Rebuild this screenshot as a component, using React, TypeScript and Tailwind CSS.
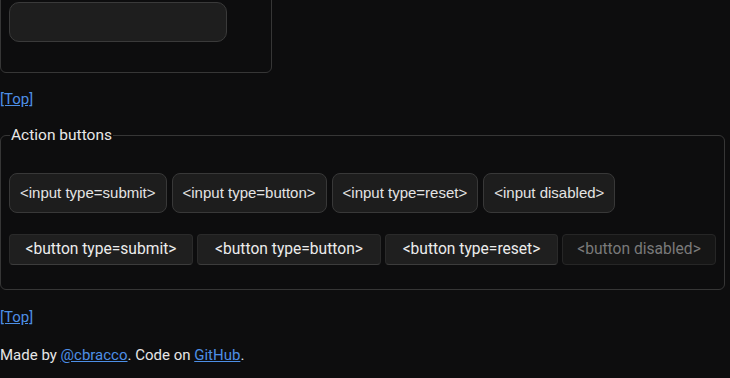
import React from "react";

const body = { fontFamily: 'Roboto, "Noto Sans", sans-serif' };

export default function App() {
  const inputBtn =
    "shrink-0 whitespace-nowrap rounded-[8px] border border-[#383838] bg-[#1d1d1d] px-[10px] py-[10px] text-[15px] leading-[18px] text-[#e4e4e4] font-['Liberation_Sans',Arial,sans-serif]";
  const btn =
    "shrink-0 whitespace-nowrap rounded-[4px] border border-[#2a2a2a] border-b-[#3c3c3c] bg-[#1f1f1f] py-[5px] text-center text-[15.6px] leading-[19px] text-[#ececec]";
  return (
    <div className="min-h-[378px] w-[730px] overflow-hidden bg-[#0d0d0e] text-[15px] leading-[24px] text-[#e6e6e6]" style={body}>
      <div className="-mt-[30px] w-[272px] rounded-[6px] border border-[#363636] pl-[8px] pt-[31px] pb-[30px]">
        <div className="h-[40px] w-[218px] rounded-[10px] border border-[#3a3a3a] bg-[#1e1e1e]" />
      </div>
      <div className="mt-[14px]">
        <a href="#top" className="text-[#4d8fe6] underline">[Top]</a>
      </div>
      <fieldset className="mt-[12px] w-[725px] rounded-[6px] border border-[#363636] px-[8px] pt-[26px] pb-[24px]">
        <legend className="ml-[1px] px-[1px] text-[15.5px] text-[#e8e8e8]">Action buttons</legend>
        <div className="flex gap-[5px]">
          <button className={inputBtn}>&lt;input type=submit&gt;</button>
          <button className={inputBtn}>&lt;input type=button&gt;</button>
          <button className={inputBtn}>&lt;input type=reset&gt;</button>
          <button className={inputBtn}>&lt;input disabled&gt;</button>
        </div>
        <div className="mt-[21px] flex gap-[4px]">
          <button className={`${btn} w-[184px]`}>&lt;button type=submit&gt;</button>
          <button className={`${btn} w-[184px]`}>&lt;button type=button&gt;</button>
          <button className={`${btn} w-[173px]`}>&lt;button type=reset&gt;</button>
          <button className="w-[154px] shrink-0 whitespace-nowrap rounded-[4px] border border-[#262626] bg-[#161616] py-[5px] text-center text-[15.6px] leading-[19px] text-[#7a7a7a]" disabled>
            &lt;button disabled&gt;
          </button>
        </div>
      </fieldset>
      <div className="mt-[15px]">
        <a href="#top" className="text-[#4d8fe6] underline">[Top]</a>
      </div>
      <p className="mt-[14px]">
        Made by <a href="#" className="text-[#4d8fe6] underline">@cbracco</a>. Code on{" "}
        <a href="#" className="text-[#4d8fe6] underline">GitHub</a>.
      </p>
    </div>
  );
}
